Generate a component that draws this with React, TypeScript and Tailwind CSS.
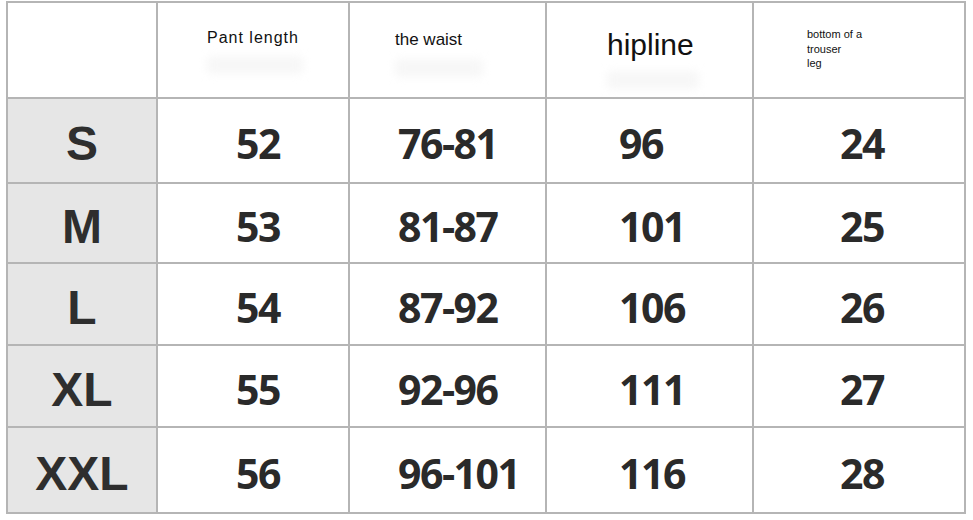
import React from 'react';

const rows = [
  { size: 'S', vals: ['52', '76-81', '96', '24'], h: 'h-[83px]' },
  { size: 'M', vals: ['53', '81-87', '101', '25'], h: 'h-[78px]' },
  { size: 'L', vals: ['54', '87-92', '106', '26'], h: 'h-[80px]' },
  { size: 'XL', vals: ['55', '92-96', '111', '27'], h: 'h-[80px]' },
  { size: 'XXL', vals: ['56', '96-101', '116', '28'], h: 'h-[84px]' },
];

// left padding of the numbers in each data column
const pads = ['pl-[78px]', 'pl-[48px]', 'pl-[72px]', 'pl-[86px]'];

function Ghost({ w }: { w: string }) {
  return <div className={`${w} h-[18px] mt-2 bg-[#f7f7f7] blur-[4px] rounded`} />;
}

export default function App() {
  return (
    <div className="w-[973px] h-[520px] bg-white pl-[6px] pt-[1px]">
      <div className="grid grid-cols-[148px_190px_195px_205px_210px] gap-[2px] p-[2px] bg-[#b5b5b5] w-[960px]">
        {/* header */}
        <div className="h-[94px] bg-white" />
        <div className="h-[94px] bg-white pl-[49px] pt-[25px] font-['Liberation_Sans',sans-serif] text-[16px] leading-[20px] tracking-[1px] text-[#111]">
          Pant length
          <Ghost w="w-[96px]" />
        </div>
        <div className="h-[94px] bg-white pl-[45px] pt-[26px] font-['Liberation_Sans',sans-serif] text-[17px] leading-[22px] text-[#111]">
          the waist
          <Ghost w="w-[88px]" />
        </div>
        <div className="h-[94px] bg-white pl-[60px] pt-[24px] font-['Liberation_Sans',sans-serif] text-[30px] leading-[36px] text-[#111]">
          hipline
          <Ghost w="w-[92px]" />
        </div>
        <div className="h-[94px] bg-white pl-[53px] pt-[24px] font-['Liberation_Sans',sans-serif] text-[11px] leading-[14.5px] text-[#111]">
          <div>bottom of a</div>
          <div>trouser</div>
          <div>leg</div>
        </div>

        {rows.map((r) => (
          <React.Fragment key={r.size}>
            <div className={`${r.h} bg-[#e6e6e6] flex items-center justify-center pt-[7px] font-['Liberation_Sans',sans-serif] font-bold text-[48px] text-[#2e2e2e]`}>
              {r.size}
            </div>
            {r.vals.map((v, i) => (
              <div
                key={i}
                className={`${r.h} bg-white flex items-center ${pads[i]} pt-[7px] font-['Open_Sans',sans-serif] font-bold text-[41px] tracking-[-1.5px] text-[#2a2a2a]`}
              >
                {v}
              </div>
            ))}
          </React.Fragment>
        ))}
      </div>
    </div>
  );
}
